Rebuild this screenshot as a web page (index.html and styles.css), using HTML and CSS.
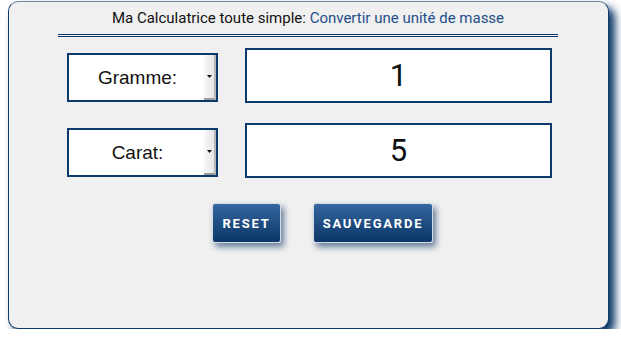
FILE: index.html
```html
<!DOCTYPE html>
<html lang="fr">
<head>
<meta charset="utf-8">
<title>Ma Calculatrice toute simple</title>
<link rel="stylesheet" href="styles.css">
</head>
<body>
<div class="card">
  <h1 class="title">Ma Calculatrice toute simple: <span class="title-accent">Convertir une unité de masse</span></h1>
  <div class="rows">
    <div class="row">
      <div class="select">
        <span class="select-value">Gramme:</span>
        <span class="select-btn"><svg width="5" height="3" viewBox="0 0 5 3"><path d="M0 0H5L2.5 3Z" fill="#111"/></svg></span>
      </div>
      <input class="value" type="text" value="1" readonly>
    </div>
    <div class="row">
      <div class="select">
        <span class="select-value">Carat:</span>
        <span class="select-btn"><svg width="5" height="3" viewBox="0 0 5 3"><path d="M0 0H5L2.5 3Z" fill="#111"/></svg></span>
      </div>
      <input class="value" type="text" value="5" readonly>
    </div>
  </div>
  <div class="actions">
    <button class="btn btn-reset" type="button">RESET</button>
    <button class="btn btn-save" type="button">SAUVEGARDE</button>
  </div>
</div>
</body>
</html>
```

FILE: styles.css
```css
html, body {
  margin: 0;
  background: #ffffff;
}
body {
  padding: 1px 0 0 8px;
}
.card {
  box-sizing: border-box;
  width: 601px;
  height: 328px;
  border: 1px solid #0c3a6c;
  border-top-color: #6f86a8;
  border-radius: 10px;
  background: #f0f0f0;
  box-shadow: 6px 6px 8px #0a3566;
  padding-top: 6px;
}
.title {
  margin: 0 50px 0 49px;
  padding-bottom: 6px;
  border-bottom: 3px double #0c3a6c;
  font-family: Roboto, "Liberation Sans", sans-serif;
  font-weight: 400;
  font-size: 15px;
  line-height: 20px;
  letter-spacing: 0;
  color: #111111;
  text-align: center;
}
.title-accent {
  color: #1f4f8a;
}
.rows {
  display: flex;
  flex-direction: column;
  gap: 20px;
  margin-top: 11px;
  padding-left: 58px;
}
.row {
  display: flex;
  align-items: flex-end;
  gap: 27px;
}
.select {
  box-sizing: border-box;
  width: 151px;
  height: 49px;
  margin-bottom: 1px;
  border: 2px solid #0c3a6c;
  background: #ffffff;
  display: flex;
}
.select-value {
  flex: 1;
  display: flex;
  align-items: center;
  justify-content: center;
  padding-left: 2px;
  font-family: "Liberation Sans", Arial, sans-serif;
  font-size: 19px;
  color: #111111;
}
.select-btn {
  width: 12px;
  display: flex;
  align-items: center;
  justify-content: center;
  background: linear-gradient(to right, #f8f8f8, #e6e6e6);
  border-right: 2px solid #b8b8b8;
  border-bottom: 2px solid #9a9a9a;
  box-sizing: border-box;
}
.value {
  box-sizing: border-box;
  width: 307px;
  height: 55px;
  margin: 0;
  padding: 0;
  border: 2px solid #0c3a6c;
  background: #ffffff;
  outline: none;
  text-align: center;
  font-family: Roboto, "Liberation Sans", sans-serif;
  font-size: 31px;
  color: #111111;
}
.actions {
  display: flex;
  gap: 32px;
  margin-top: 25px;
  padding-left: 203px;
}
.btn {
  box-sizing: border-box;
  height: 40px;
  padding: 0;
  border: 1px solid #d4dce8;
  border-radius: 3px;
  background: linear-gradient(to bottom, #3566a0, #0b3666);
  box-shadow: 3px 4px 6px rgba(12, 50, 100, 0.6);
  color: #ffffff;
  font-family: Roboto, "Liberation Sans", sans-serif;
  font-weight: 700;
  font-size: 13px;
  letter-spacing: 1.8px;
  text-align: center;
}
.btn-reset {
  width: 69px;
}
.btn-save {
  width: 120px;
}
```
